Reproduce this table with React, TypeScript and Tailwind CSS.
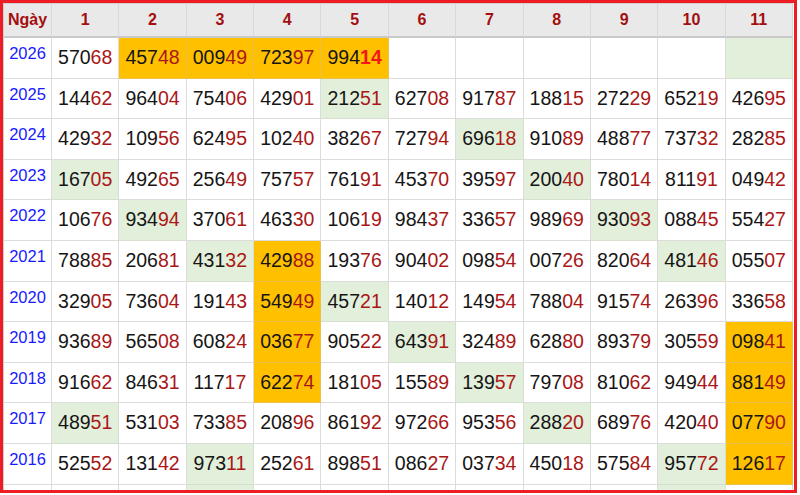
import React from 'react';

type Mark = 'y' | 'g' | undefined;

interface Cell {
  v: string;
  m?: Mark;
  hot?: boolean;
}

const rows: { year: string; cells: Cell[] }[] = [
  {
    year: '2026',
    cells: [
      { v: '57068' },
      { v: '45748', m: 'y' },
      { v: '00949', m: 'y' },
      { v: '72397', m: 'y' },
      { v: '99414', m: 'y', hot: true },
      { v: '' },
      { v: '' },
      { v: '' },
      { v: '' },
      { v: '' },
      { v: '', m: 'g' },
    ],
  },
  { year: '2025', cells: parse('14462 96404 75406 42901 21251g 62708 91787 18815 27229 65219 42695') },
  { year: '2024', cells: parse('42932 10956 62495 10240 38267 72794 69618g 91089 48877 73732 28285') },
  { year: '2023', cells: parse('16705g 49265 25649 75757 76191 45370 39597 20040g 78014 81191 04942') },
  { year: '2022', cells: parse('10676 93494g 37061 46330 10619 98437 33657 98969 93093g 08845 55427') },
  { year: '2021', cells: parse('78885 20681 43132g 42988y 19376 90402 09854 00726 82064 48146g 05507') },
  { year: '2020', cells: parse('32905 73604 19143 54949y 45721g 14012 14954 78804 91574 26396 33658') },
  { year: '2019', cells: parse('93689 56508 60824 03677y 90522 64391g 32489 62880 89379 30559 09841y') },
  { year: '2018', cells: parse('91662 84631 11717 62274y 18105 15589 13957g 79708 81062 94944 88149y') },
  { year: '2017', cells: parse('48951g 53103 73385 20896 86192 97266 95356 28820g 68976 42040 07790y') },
  { year: '2016', cells: parse('52552 13142 97311g 25261 89851 08627 03734 45018 57584 95772g 12617y') },
];

function parse(s: string): Cell[] {
  return s.split(' ').map((t) => {
    const last = t[t.length - 1];
    if (last === 'y' || last === 'g') return { v: t.slice(0, -1), m: last };
    return { v: t };
  });
}

const bgFor = (m: Mark) =>
  m === 'y' ? 'bg-[#ffc000] border-[#e8c04a]' : m === 'g' ? 'bg-[#e2efda] border-[#d6dfd0]' : 'bg-white border-[#dcdcdc]';

function Num({ cell }: { cell: Cell }) {
  if (!cell.v) return null;
  return (
    <span>
      <span className="text-[#151515]">{cell.v.slice(0, 3)}</span>
      <span className={cell.hot ? 'text-[#f01818] font-bold' : 'text-[#aa1717]'}>{cell.v.slice(3)}</span>
    </span>
  );
}

export default function App() {
  const cols = Array.from({ length: 11 }, (_, i) => i + 1);
  return (
    <div className="w-[800px] h-[495px] bg-white font-['Liberation_Sans',Arial,sans-serif]">
      <div className="w-[797px] h-[493px] border-[3px] border-[#ee1c25] overflow-hidden bg-white">
        <div className="w-[790px] grid grid-cols-[48px_repeat(11,1fr)] grid-rows-[34px_repeat(12,40.6px)] border-l border-t border-[#d0d0d0]">
          <div className="flex items-center justify-center bg-[#e9e9e9] border-r border-b-2 border-r-[#d8d8d8] border-b-[#c9c9c9] text-[16px] font-bold text-[#a30f0f]">
            Ngày
          </div>
          {cols.map((c) => (
            <div
              key={c}
              className="flex items-center justify-center bg-[#e9e9e9] border-r border-b-2 border-r-[#d8d8d8] border-b-[#c9c9c9] text-[16px] font-bold text-[#a30f0f]"
            >
              {c}
            </div>
          ))}
          {rows.map((r) => (
            <React.Fragment key={r.year}>
              <div className="flex justify-center pt-[6px] border-r border-b border-[#dcdcdc] text-[16.5px] text-[#1a1aff] leading-[18px]">
                {r.year}
              </div>
              {r.cells.map((c, i) => (
                <div
                  key={i}
                  className={`flex items-center justify-center border-r border-b text-[19.5px] leading-none ${bgFor(c.m)}`}
                >
                  <Num cell={c} />
                </div>
              ))}
            </React.Fragment>
          ))}
          <div className="border-r border-b border-[#dcdcdc]" />
          {cols.map((c) => (
            <div key={c} className={`border-r border-b ${c === 3 || c === 10 ? 'bg-[#e2efda] border-[#d6dfd0]' : 'border-[#dcdcdc]'}`} />
          ))}
        </div>
      </div>
    </div>
  );
}
